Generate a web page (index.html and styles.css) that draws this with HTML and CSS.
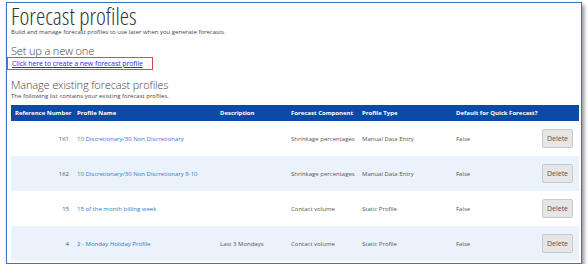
FILE: index.html
```html
<!DOCTYPE html>
<html>
<head>
<meta charset="utf-8">
<link rel="stylesheet" href="styles.css">
</head>
<body>
<div class="frame">
  <h1 class="title">Forecast profiles</h1>
  <p class="sub">Build and manage forecast profiles to use later when you generate forecasts.</p>
  <h2 class="section">Set up a new one</h2>
  <div class="linkbox"><a class="newlink" href="#">Click here to create a new forecast profile</a></div>
  <h2 class="section manage">Manage existing forecast profiles</h2>
  <p class="sub sub2">The following list contains your existing forecast profiles.</p>
  <table class="grid">
    <colgroup>
      <col class="c1"><col class="c2"><col class="c3"><col class="c4"><col class="c5"><col class="c6"><col class="c7">
    </colgroup>
    <thead>
      <tr>
        <th>Reference Number</th><th>Profile Name</th><th>Description</th><th>Forecast Component</th><th>Profile Type</th><th>Default for Quick Forecast?</th><th></th>
      </tr>
    </thead>
    <tbody>
      <tr>
        <td class="num">161</td><td><a class="pl" href="#">10 Discretionary/30 Non Discretionary</a></td><td></td><td>Shrinkage percentages</td><td>Manual Data Entry</td><td>False</td><td><button class="del">Delete</button></td>
      </tr>
      <tr class="alt">
        <td class="num">162</td><td><a class="pl" href="#">10 Discretionary/30 Non Discretionary 8-10</a></td><td></td><td>Shrinkage percentages</td><td>Manual Data Entry</td><td>False</td><td><button class="del">Delete</button></td>
      </tr>
      <tr>
        <td class="num">15</td><td><a class="pl" href="#">15 of the month billing week</a></td><td></td><td>Contact volume</td><td>Static Profile</td><td>False</td><td><button class="del">Delete</button></td>
      </tr>
      <tr class="alt">
        <td class="num">4</td><td><a class="pl" href="#">2 - Monday Holiday Profile</a></td><td>Last 3 Mondays</td><td>Contact volume</td><td>Static Profile</td><td>False</td><td><button class="del">Delete</button></td>
      </tr>
    </tbody>
  </table>
</div>
</body>
</html>
```

FILE: styles.css
```css
html, body {
  margin: 0;
  padding: 0;
  background: #ffffff;
}
body {
  font-family: "Open Sans", "Liberation Sans", sans-serif;
  color: #444;
}
.frame {
  margin: 2px 0 0 6px;
  width: 576px;
  height: 262px;
  border: 1px solid #3d72c8;
  box-shadow: 2px 3px 4px rgba(0, 0, 0, 0.45);
  padding: 0 2px 0 4px;
  box-sizing: border-box;
  display: flex;
  flex-direction: column;
}
.title {
  margin: 1px 0 0 0;
  font-weight: 300;
  font-size: 23.5px;
  line-height: 24px;
  font-stretch: 75%;
  color: #333;
  letter-spacing: 0;
}
.sub {
  margin: 0;
  font-size: 6px;
  line-height: 8px;
  color: #444;
}
.sub2 {
  margin-top: 2px;
  line-height: 7px;
}
.section {
  margin: 9px 0 0 0;
  font-weight: 300;
  font-size: 11px;
  line-height: 12px;
  letter-spacing: -0.15px;
  color: #444;
}
.linkbox {
  align-self: flex-start;
  display: flex;
  align-items: center;
  margin-left: -4px;
  border: 1.5px solid #e0464e;
  padding: 0 9px 0 4px;
  height: 13px;
  box-sizing: border-box;
}
.newlink {
  display: block;
  font-size: 7px;
  line-height: 9px;
  letter-spacing: -0.1px;
  color: #2233ee;
  text-decoration: underline;
}
.grid {
  margin-top: 5px;
  width: 568px;
  border-collapse: collapse;
  table-layout: fixed;
  font-size: 6px;
}
.c1 { width: 62px; }
.c2 { width: 143px; }
.c3 { width: 71px; }
.c4 { width: 71px; }
.c5 { width: 94px; }
.c6 { width: 86px; }
.c7 { width: 41px; }
.grid th {
  background: #0d4aa6;
  color: #fff;
  font-weight: 700;
  text-align: left;
  height: 16px;
  padding: 0 4px;
  white-space: nowrap;
}
.grid td {
  height: 35px;
  padding: 0 4px;
  color: #555;
  white-space: nowrap;
}
.grid tr.alt td {
  background: #eaf3fc;
}
.grid td.num {
  text-align: right;
}
.pl {
  color: #3278cc;
  text-decoration: none;
}
.del {
  width: 31px;
  height: 19px;
  padding: 0;
  font-family: inherit;
  font-size: 7px;
  color: #555;
  background: #e6e6e6;
  border: 1px solid #c9c9c9;
  border-radius: 2px;
}
```
